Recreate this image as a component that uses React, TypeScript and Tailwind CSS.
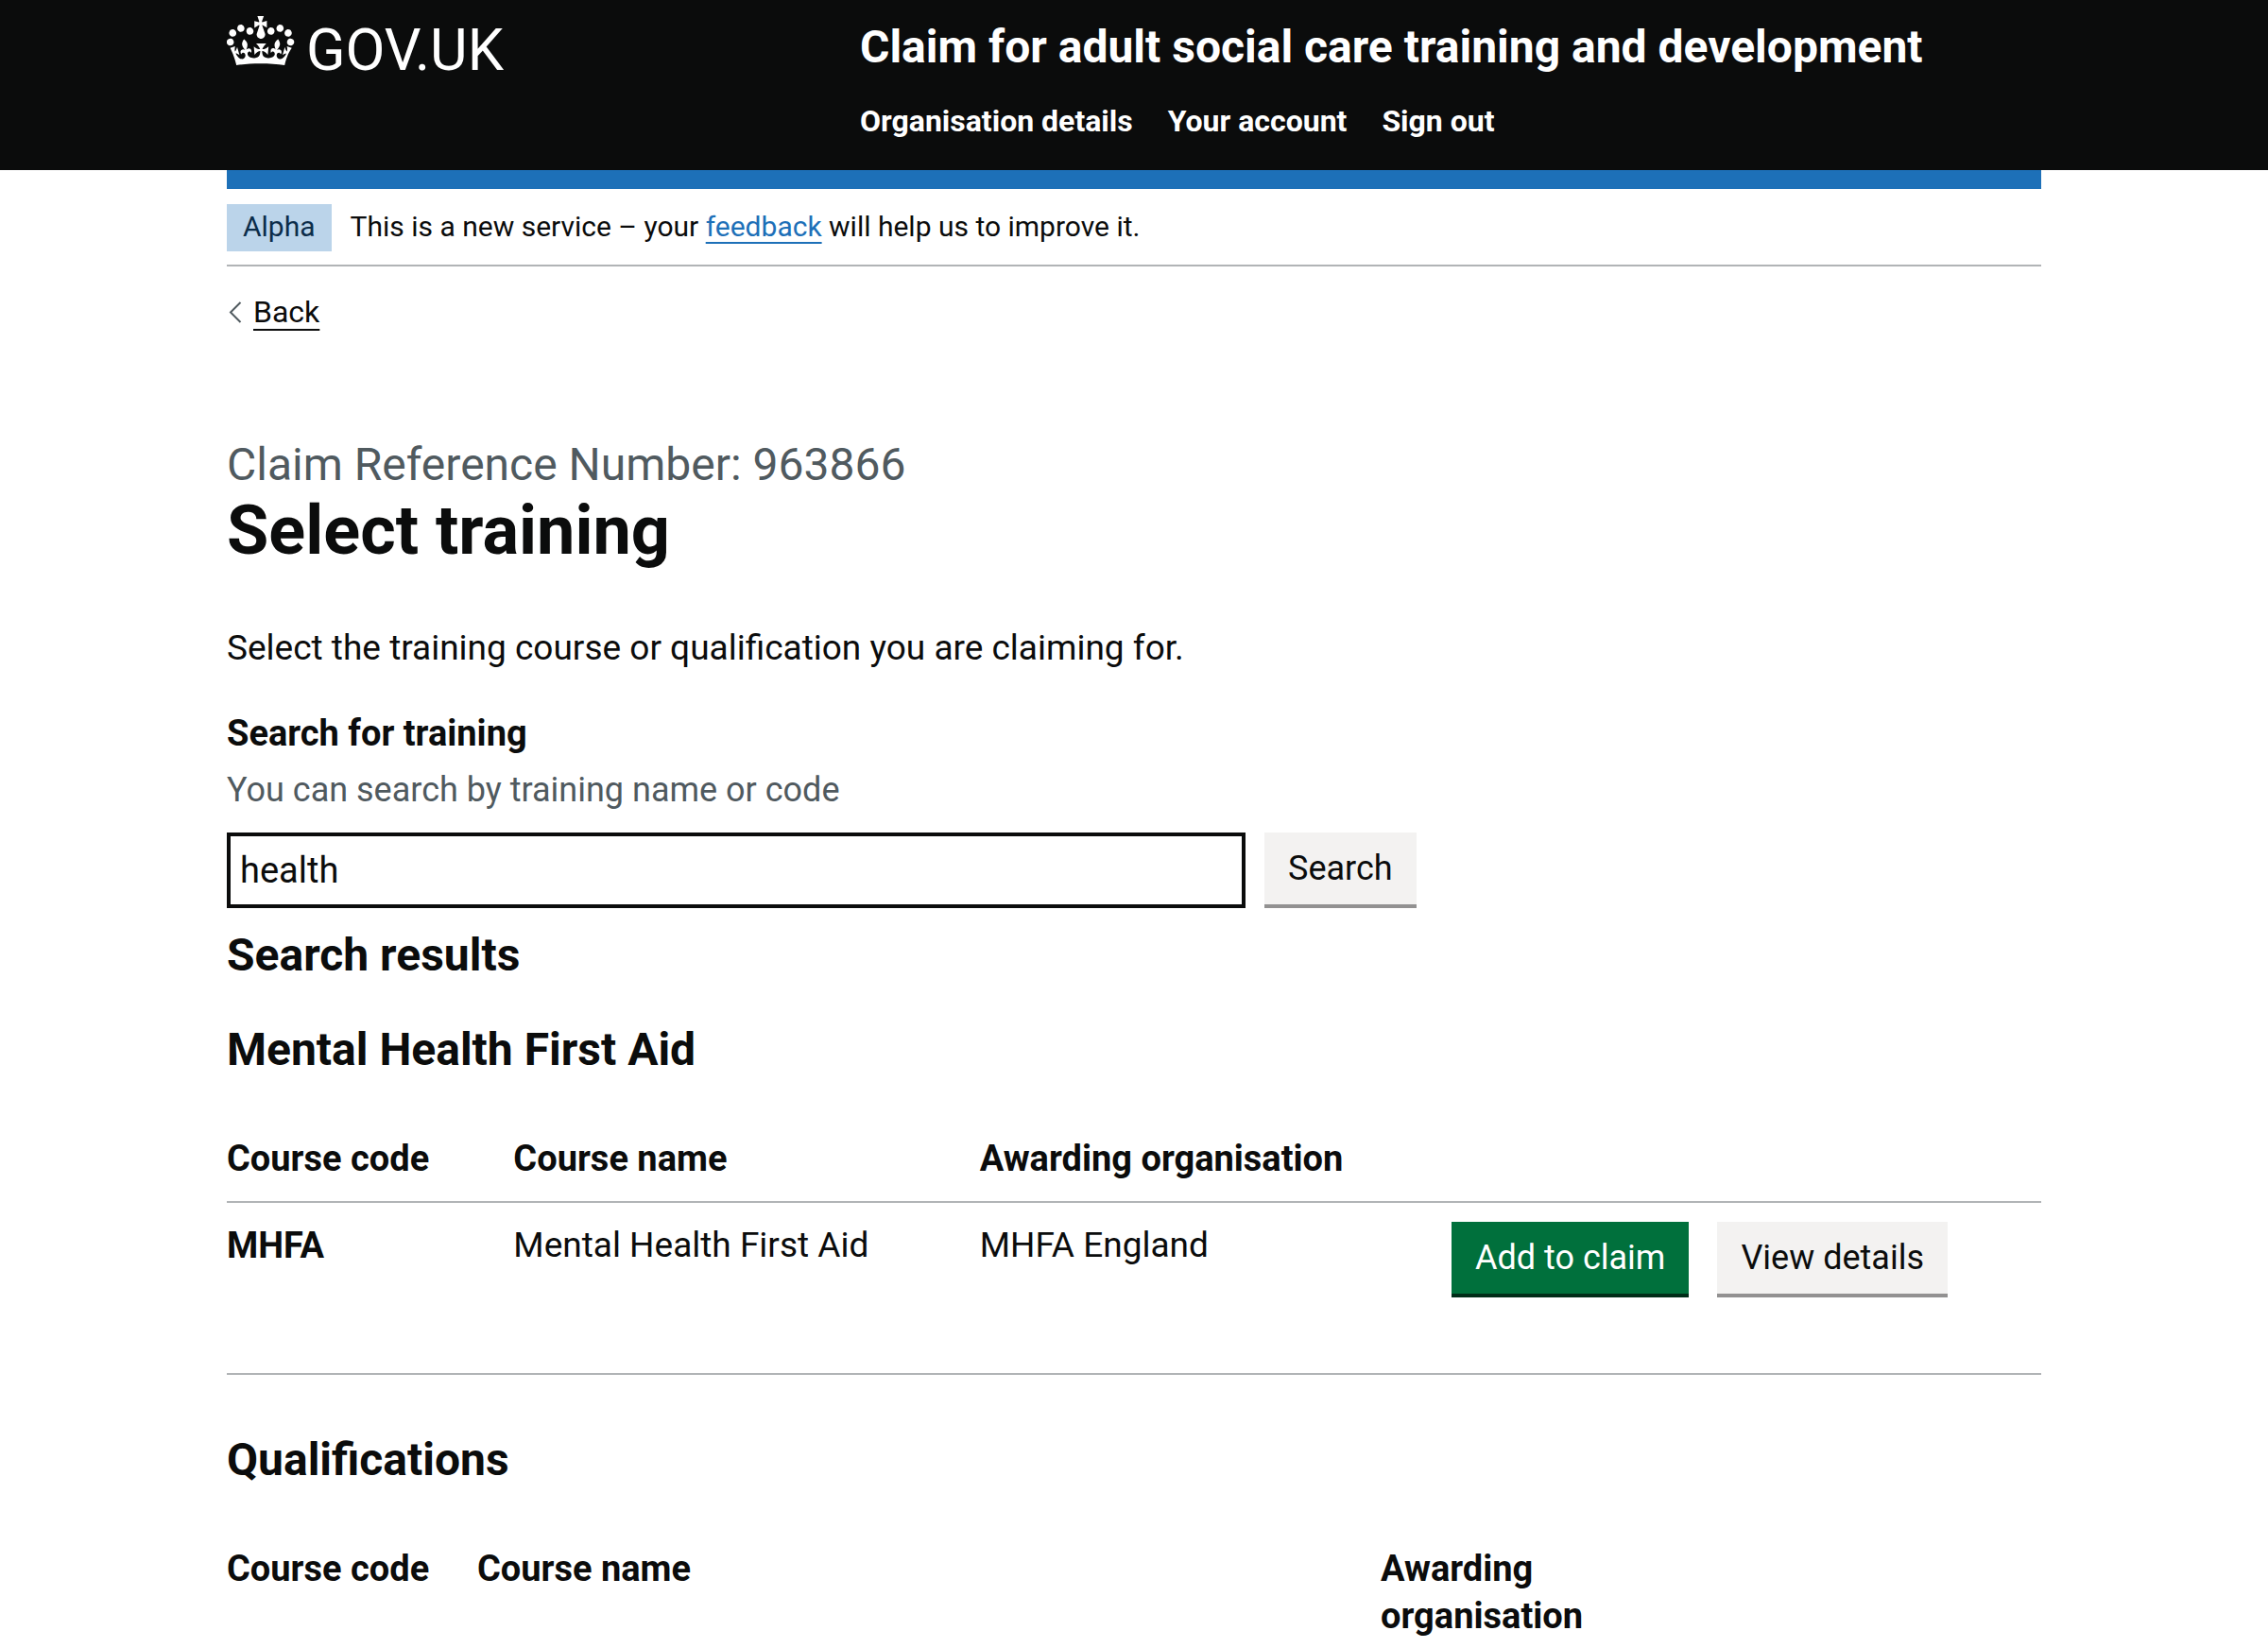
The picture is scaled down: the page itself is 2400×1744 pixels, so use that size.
import type { ReactNode } from "react";

function Crown() {
  return (
    <svg viewBox="0 0 36 32" className="h-16 w-[72px] shrink-0" fill="currentColor" fillRule="evenodd" aria-hidden="true">
      <path d="M6.7 12.2c1 .4 2.1-.1 2.5-1s-.1-2.1-1-2.5c-1-.4-2.1.1-2.5 1-.4 1 0 2.1 1 2.5m-4.3 2.5c1 .4 2.1-.1 2.5-1s-.1-2.1-1-2.5c-1-.4-2.1.1-2.5 1-.5 1 0 2.1 1 2.5m-1.3 4.8c1 .4 2.1-.1 2.5-1s-.1-2.1-1-2.5c-1-.4-2.1.1-2.5 1-.4 1 0 2.1 1 2.5m10.4-5.8c1 .4 2.1-.1 2.5-1s-.1-2.1-1-2.5c-1-.4-2.1.1-2.5 1s0 2.1 1 2.5m17.4-1.5c-1 .4-2.1-.1-2.5-1s.1-2.1 1-2.5c1-.4 2.1.1 2.5 1 .5 1 0 2.1-1 2.5m4.3 2.5c-1 .4-2.1-.1-2.5-1s.1-2.1 1-2.5c1-.4 2.1.1 2.5 1 .5 1 0 2.1-1 2.5m1.3 4.8c-1 .4-2.1-.1-2.5-1s.1-2.1 1-2.5c1-.4 2.1.1 2.5 1 .4 1 0 2.1-1 2.5m-10.4-5.8c-1 .4-2.1-.1-2.5-1s.1-2.1 1-2.5c1-.4 2.1.1 2.5 1s0 2.1-1 2.5m-5.3-4.9 2.4 1.3V6.5l-2.4.8c-.1-.1-.1-.2-.2-.3s1-3 1-3h-3.4s1 2.9 1 3c-.1.1-.2.2-.2.3l-2.4-.7v3.6L17 8.8c.1.1.2.2.3.2l-1.4 4.2c-.1.2-.1.4-.1.6 0 1.1.8 2 1.9 2.2h.7c1-.2 1.9-1.1 1.9-2.1 0-.2 0-.4-.1-.6l-1.4-4.2c-.2-.1-.1-.2 0-.3m-1 20.3c4.6 0 8.9.3 12.8.9 1.1-4.6 2.4-7.2 3.8-9.1l-2.6-.9c.3 1.3.3 1.9 0 2.8-.4-.4-.8-1.2-1.1-2.4l-1.2 4.2c.8-.5 1.4-.9 2-.9-1.2 2.6-2.7 3.1-3.6 3-1.2-.2-1.7-1.3-1.5-2.2.3-1.3 1.6-1.6 2.2-.2 1.2-2.4-.8-3.1-2.1-2.4 1.9-1.9 2.2-3.6.6-5.7-2.2 1.7-2.2 3.3-1.2 5.6-1.3-1.5-3.3-.7-2.5 1.7.9-1.4 2.1-.5 2 .8-.2 1.2-1.7 2.1-3.7 1.9-2.8-.2-3-2.2-3-3.7.7-.1 1.9.5 3 2l.4-4.4c-1.1 1.1-2.2 1.4-3.3 1.4.4-1.2 2.1-3 2.1-3h-5.4s1.8 1.8 2.1 3c-1.1 0-2.2-.3-3.3-1.4l.4 4.4c1.1-1.5 2.3-2.1 3-2-.1 1.6-.2 3.5-3 3.7-1.9.2-3.5-.7-3.7-1.9-.2-1.3 1-2.2 1.9-.8.7-2.4-1.3-3.1-2.6-1.7 1-2.3 1-4-1.2-5.6-1.6 2.1-1.3 3.8.6 5.7-1.3-.7-3.2 0-2.1 2.4.6-1.4 1.9-1.1 2.2.2.2.9-.3 2-1.5 2.2-.9.1-2.4-.5-3.6-3 .6 0 1.2.3 2 .9l-1.2-4.2c-.3 1.1-.7 1.9-1.1 2.4-.3-.8-.2-1.4 0-2.8l-2.6.9C2.7 22.8 4 25.4 5.1 30c3.8-.6 8.1-.9 12.7-.9" />
    </svg>
  );
}

function Container({ children }: { children: ReactNode }) {
  return <div className="mx-auto w-4/5 max-w-[1920px]">{children}</div>;
}

function Button({ children, primary = false, type = "button" }: { children: ReactNode; primary?: boolean; type?: "button" | "submit" }) {
  const tone = primary
    ? "border-[#002d18] bg-[#00703c] text-white"
    : "border-[#929191] bg-[#f3f2f1] text-[#0b0c0c]";
  return (
    <button type={type} className={`h-20 shrink-0 border-b-4 px-[25px] text-[36px] whitespace-nowrap ${tone}`}>
      {children}
    </button>
  );
}

export default function App() {
  return (
    <div className="min-h-screen bg-white font-[Roboto,sans-serif] text-[37px] leading-[50px] text-[#0b0c0c]">
      <header className="bg-[#0b0c0c] text-white">
        <Container>
          <div className="flex items-start">
            <div className="w-1/3 pt-[9px]">
              <a href="#" className="flex w-fit items-start gap-3 text-[61px] leading-[88px]">
                <Crown />
                <span>GOV.UK</span>
              </a>
            </div>
            <div className="w-2/3 pt-5 pb-8 pl-[30px] font-bold">
              <a href="#" className="block text-[48px] leading-[60px]">
                Claim for adult social care training and development
              </a>
              <nav aria-label="Account" className="mt-7">
                <ul className="flex gap-[37px] text-[32px] leading-10">
                  <li><a href="#">Organisation details</a></li>
                  <li><a href="#">Your account</a></li>
                  <li><a href="#">Sign out</a></li>
                </ul>
              </nav>
            </div>
          </div>
        </Container>
      </header>

      <Container>
        <div className="h-5 bg-[#1d70b8]" />
        <div className="flex items-start gap-5 border-b-2 border-[#b1b4b6] pt-4 pb-[14px] text-[30px] leading-10">
          <strong className="bg-[#bbd4ea] px-[17px] pt-1 pb-[6px] font-normal text-[#0c2d4a]">Alpha</strong>
          <p className="pt-1">
            This is a new service – your{" "}
            <a href="#" className="text-[#1d70b8] underline decoration-2 underline-offset-[6px]">feedback</a>{" "}
            will help us to improve it.
          </p>
        </div>

        <a href="#" className="mt-7 flex w-fit items-center gap-3 text-[32px] leading-10">
          <svg viewBox="0 0 14 24" className="ml-[2px] h-6 w-[14px]" fill="none" stroke="#505a5f" strokeWidth="2" aria-hidden="true">
            <path d="M12.5 2 2 12.5 12.5 23" />
          </svg>
          <span className="underline decoration-2 underline-offset-[7px]">Back</span>
        </a>

        <main className="pt-28">
          <span className="block text-[48px] leading-[60px] text-[#505a5f]">Claim Reference Number: 963866</span>
          <h1 className="text-[72px] leading-[79px] font-bold">Select training</h1>
          <p className="mt-[60px]">Select the training course or qualification you are claiming for.</p>

          <form className="mt-10" onSubmit={(event) => event.preventDefault()}>
            <label htmlFor="training-search" className="block text-[38px] leading-[50px] font-bold">Search for training</label>
            <p id="training-hint" className="mt-[10px] text-[36px] leading-[50px] text-[#505a5f]">
              You can search by training name or code
            </p>
            <div className="mt-5 flex gap-5">
              <input
                id="training-search"
                type="text"
                defaultValue="health"
                aria-describedby="training-hint"
                className="h-20 w-[1078px] min-w-0 border-4 border-[#0b0c0c] bg-white px-[10px] text-[38px]"
              />
              <Button type="submit">Search</Button>
            </div>
          </form>

          <h2 className="mt-5 text-[48px] leading-[60px] font-bold">Search results</h2>

          <h3 className="mt-10 text-[48px] leading-[60px] font-bold">Mental Health First Aid</h3>
          <table className="mt-10 w-full table-fixed text-left">
            <thead className="text-[38px] leading-[50px]">
              <tr className="border-b-2 border-[#b1b4b6]">
                <th scope="col" className="w-[15.8%] py-5">Course code</th>
                <th scope="col" className="w-[25.7%] py-5">Course name</th>
                <th scope="col" className="w-[26%] py-5">Awarding organisation</th>
                <td className="py-5" />
              </tr>
            </thead>
            <tbody>
              <tr className="border-b-2 border-[#b1b4b6] align-top">
                <th scope="row" className="py-5 text-[38px] leading-[50px]">MHFA</th>
                <td className="py-5">Mental Health First Aid</td>
                <td className="py-5">MHFA England</td>
                <td className="pt-5 pb-20">
                  <div className="flex gap-[30px]">
                    <Button primary>Add to claim</Button>
                    <Button>View details</Button>
                  </div>
                </td>
              </tr>
            </tbody>
          </table>

          <h3 className="mt-[60px] text-[48px] leading-[60px] font-bold">Qualifications</h3>
          <table className="mt-10 w-full table-fixed text-left">
            <thead className="text-[38px] leading-[50px]">
              <tr className="align-top">
                <th scope="col" className="w-[13.8%] pt-5">Course code</th>
                <th scope="col" className="w-[49.8%] pt-5">Course name</th>
                <th scope="col" className="w-[13%] pt-5">Awarding organisation</th>
                <td />
              </tr>
            </thead>
          </table>
        </main>
      </Container>
    </div>
  );
}
